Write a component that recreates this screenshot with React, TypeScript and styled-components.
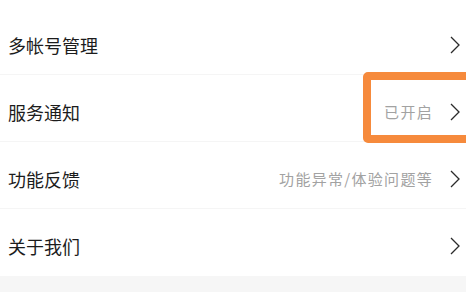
import React from "react";
import styled, { createGlobalStyle } from "styled-components";

const Global = createGlobalStyle`
  html, body {
    margin: 0;
    padding: 0;
    overflow: hidden;
    background: #f6f6f6;
  }
  body {
    font-family: "Noto Sans CJK SC", "Noto Sans", sans-serif;
  }
`;

const Page = styled.div`
  width: 466px;
  height: 292px;
  background: #f6f6f6;
  overflow: hidden;
`;

const List = styled.div`
  background: #ffffff;
  padding-top: 8px;
`;

const Row = styled.div<{ $last?: boolean }>`
  position: relative;
  height: 67px;
  box-sizing: border-box;
  padding: 7px 6px 0 8px;
  display: flex;
  align-items: center;
  border-bottom: ${(p) => (p.$last ? "none" : "1px solid #f5f5f5")};
`;

const Label = styled.span`
  flex: 1;
  font-size: 18px;
  color: #1c1c1c;
  line-height: 1;
`;

const Hint = styled.span`
  font-size: 15px;
  letter-spacing: 1.3px;
  color: #a2a2a2;
  line-height: 1;
`;

const Chevron = styled.svg`
  width: 10px;
  height: 18px;
  margin-left: 17px;
  flex-shrink: 0;
`;

const Highlight = styled.span`
  position: absolute;
  left: 363px;
  top: -3px;
  width: 120px;
  height: 71px;
  box-sizing: border-box;
  border: 8px solid #f68a3c;
  border-radius: 5px;
  pointer-events: none;
`;

const Arrow = () => (
  <Chevron viewBox="0 0 10 18">
    <path d="M1 1 L9 9 L1 17" fill="none" stroke="#2b2b2b" strokeWidth="1.3" />
  </Chevron>
);

const items = [
  { label: "多帐号管理" },
  { label: "服务通知", hint: "已开启", mark: true },
  { label: "功能反馈", hint: "功能异常/体验问题等" },
  { label: "关于我们" },
];

export default function App() {
  return (
    <Page>
      <Global />
      <List>
        {items.map((it, i) => (
          <Row key={it.label} $last={i === items.length - 1}>
            <Label>{it.label}</Label>
            {it.hint && <Hint>{it.hint}</Hint>}
            <Arrow />
            {it.mark && <Highlight />}
          </Row>
        ))}
      </List>
    </Page>
  );
}
